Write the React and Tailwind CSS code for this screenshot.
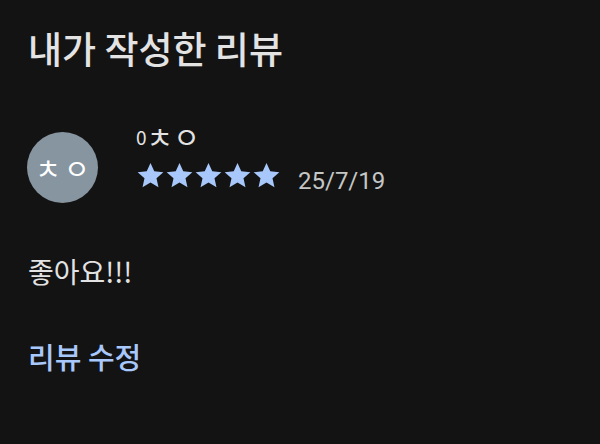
import React from 'react';

// Single star glyph
const Star = () => (
  <svg viewBox="0.6 0.6 22.8 22.8" className="w-[29px] h-[29px]" fill="#a8c7fa">
    <path d="M12 2.2l2.95 6.55 7.15.72-5.38 4.77 1.55 7.03L12 17.6l-6.27 3.67 1.55-7.03L1.9 9.47l7.15-.72z" />
  </svg>
);

export default function App() {
  return (
    <div
      className="w-[600px] h-[444px] bg-[#131313] text-[#e3e3e3] pl-[28px] pt-[26px] overflow-hidden"
      style={{ fontFamily: '"Noto Sans CJK KR", Roboto, sans-serif' }}
    >
      <h1 className="text-[37px] leading-[44px] font-medium">내가 작성한 리뷰</h1>

      <div className="flex items-start mt-[54px]">
        <div className="w-[71px] h-[71px] mt-[8px] -ml-[1px] rounded-full bg-[#8795a1] flex items-center justify-center shrink-0">
          <span className="text-[28px] leading-none text-white whitespace-nowrap tracking-[3px] pl-[3px]">ㅊㅇ</span>
        </div>
        <div className="ml-[38px]">
          <div className="flex items-center h-[24px] whitespace-nowrap">
            <span className="text-[19px] leading-none">0</span>
            <span className="text-[29px] leading-none">ㅊㅇ</span>
          </div>
          <div className="flex items-start mt-[12px]">
            <div className="flex pt-[1px]">
              <Star />
              <Star />
              <Star />
              <Star />
              <Star />
            </div>
            <span
              className="ml-[17px] mt-[7px] text-[24px] leading-[28px] text-[#c4c7c5]"
              style={{ fontFamily: 'Roboto, sans-serif' }}
            >
              25/7/19
            </span>
          </div>
        </div>
      </div>

      <p className="text-[28px] leading-[36px] mt-[50px] text-[#e3e3e3]">좋아요!!!</p>

      <button className="text-[29px] leading-[36px] mt-[49px] font-medium text-[#a8c7fa]">리뷰 수정</button>
    </div>
  );
}
